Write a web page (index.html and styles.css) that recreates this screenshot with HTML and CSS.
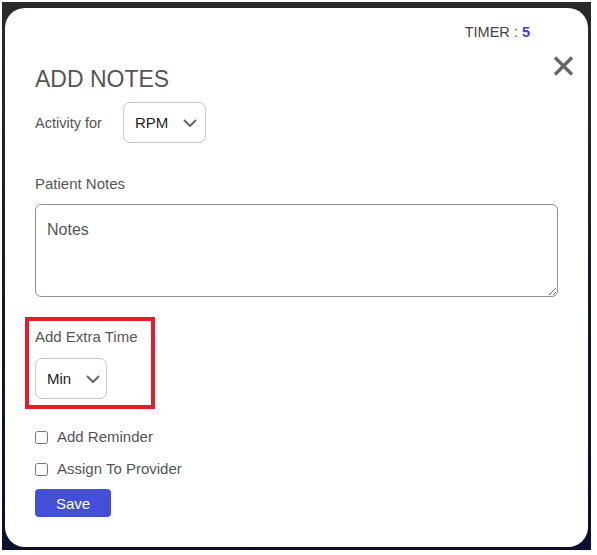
FILE: index.html
```html
<!DOCTYPE html>
<html lang="en">
<head>
<meta charset="utf-8">
<title>Add Notes</title>
<link rel="stylesheet" href="styles.css">
</head>
<body>
<div class="backdrop">
  <div class="modal">
    <div class="timer">TIMER : <span class="timer-value">5</span></div>
    <button class="close" aria-label="Close">
      <svg width="21" height="20" viewBox="0 0 21 20"><path d="M2 1.5 L19 18.5 M19 1.5 L2 18.5" stroke="#666" stroke-width="3.4" fill="none"/></svg>
    </button>
    <h1 class="title">ADD NOTES</h1>
    <div class="activity-row">
      <span class="label">Activity for</span>
      <div class="select select-rpm">
        <span class="select-text">RPM</span>
        <svg class="chevron" width="14" height="8" viewBox="0 0 14 8"><path d="M1 1 L7 7 L13 1" stroke="#666" stroke-width="2" fill="none"/></svg>
      </div>
    </div>
    <div class="label notes-label">Patient Notes</div>
    <textarea class="notes" placeholder="Notes"></textarea>
    <div class="extra-box">
      <div class="label">Add Extra Time</div>
      <div class="select select-min">
        <span class="select-text">Min</span>
        <svg class="chevron" width="14" height="8" viewBox="0 0 14 8"><path d="M1 1 L7 7 L13 1" stroke="#666" stroke-width="2" fill="none"/></svg>
      </div>
    </div>
    <label class="check-row first"><input type="checkbox" class="check"><span>Add Reminder</span></label>
    <label class="check-row"><input type="checkbox" class="check"><span>Assign To Provider</span></label>
    <button class="save">Save</button>
  </div>
</div>
</body>
</html>
```

FILE: styles.css
```css
* { box-sizing: border-box; }
html, body { margin: 0; padding: 0; background: #fff; }
body { font-family: "Liberation Sans", Arial, sans-serif; }

.backdrop {
  margin: 2px 6px 5px 2px;
  height: 548px;
  padding: 6px 3px 3px 3px;
  background: linear-gradient(180deg, #2a2a2c 0%, #1a1b24 50%, #0b0e30 100%);
}

.modal {
  position: relative;
  height: 100%;
  background: #fff;
  border-radius: 20px;
  padding: 16px 30px 0 30px;
  display: flex;
  flex-direction: column;
  align-items: flex-start;
}

.timer {
  align-self: flex-end;
  margin-right: 28px;
  font-size: 14.5px;
  line-height: 17px;
  color: #444;
}
.timer-value { color: #3a45c2; font-weight: bold; }

.close {
  position: absolute;
  top: 48px;
  right: 14px;
  width: 21px;
  height: 20px;
  padding: 0;
  border: 0;
  background: none;
  display: flex;
}

.title {
  margin: 25px 0 0 0;
  font-size: 23px;
  line-height: 27px;
  font-weight: normal;
  color: #555;
}

.label {
  font-size: 15px;
  line-height: 18px;
  color: #555;
}

.activity-row {
  margin-top: 9px;
  display: flex;
  align-items: center;
  gap: 21px;
}
.activity-row .label { font-size: 14.5px; }

.select {
  height: 41px;
  border: 1px solid #c8c8c8;
  border-radius: 7px;
  display: flex;
  align-items: center;
  justify-content: space-between;
  padding: 0 8px 0 11px;
  background: #fff;
}
.select-rpm { width: 83px; }
.select-min { width: 72px; margin-top: 12px; padding-right: 6px; }
.select-text { font-size: 15px; color: #222; }
.chevron { display: block; }

.notes-label { margin-top: 32px; }

.notes {
  margin-top: 11px;
  width: 523px;
  height: 93px;
  border: 1px solid #8f8f8f;
  border-radius: 6px;
  padding: 16px 11px 12px;
  font-family: "Liberation Sans", Arial, sans-serif;
  font-size: 16px;
  color: #333;
  resize: vertical;
  outline: none;
}
.notes::placeholder { color: #555; }

.extra-box {
  margin: 20px 0 0 -10px;
  border: 4px solid #e61b29;
  padding: 7px 13px 6px 6px;
}

.check-row {
  display: flex;
  align-items: center;
  gap: 9px;
  font-size: 15px;
  line-height: 18px;
  color: #555;
  height: 18px;
}
.check-row.first { margin-top: 19px; }
.check-row + .check-row { margin-top: 14px; }
.check {
  margin: 0;
  width: 13px;
  height: 13px;
}

.save {
  margin-top: 11px;
  width: 76px;
  height: 28px;
  border: 0;
  border-radius: 4px;
  background: #4350d6;
  color: #fff;
  font-family: "Liberation Sans", Arial, sans-serif;
  font-size: 15px;
  padding: 0;
}
```
